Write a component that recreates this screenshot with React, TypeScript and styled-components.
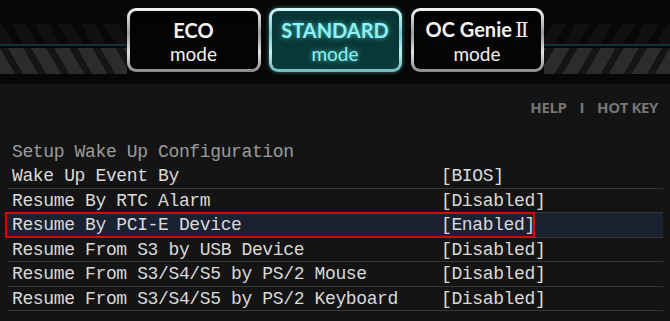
import React from "react";
import styled, { createGlobalStyle } from "styled-components";

const Global = createGlobalStyle`
  html, body { margin: 0; padding: 0; background: #141414; }
  body { width: 670px; height: 321px; overflow: hidden; }
`;

const Page = styled.div`
  width: 670px;
  height: 321px;
  display: flex;
  flex-direction: column;
  background: #141414;
`;

const TopBand = styled.div`
  height: 84px;
  display: flex;
  background: #070707;
`;

const StripePanel = styled.div`
  flex: 1;
  display: flex;
  flex-direction: column;
  padding-top: 24px;
`;

const FaintStripes = styled.div<{ $dir: "left" | "right" }>`
  height: 20px;
  background: repeating-linear-gradient(
    ${(p) => (p.$dir === "left" ? "60deg" : "-60deg")},
    #101010 0 12px,
    #080808 12px 20px
  );
`;

const TealLine = styled.div`
  height: 2px;
  background: #16303a;
`;

const Stripes = styled.div<{ $dir: "left" | "right" }>`
  height: 26px;
  margin-top: 2px;
  background: repeating-linear-gradient(
    ${(p) => (p.$dir === "left" ? "60deg" : "-60deg")},
    #2c2c2c 0 13px,
    #151515 13px 20px
  );
`;

const ModeGroup = styled.div`
  display: flex;
  align-items: flex-start;
  padding-top: 8px;
  gap: 8px;
`;

const ModeButton = styled.div<{ $active?: boolean; $w: number; $shift?: number }>`
  width: ${(p) => p.$w}px;
  margin-left: ${(p) => p.$shift ?? 0}px;
  height: 64px;
  box-sizing: border-box;
  border: 3px solid transparent;
  border-radius: 9px;
  padding-top: 2px;
  background: ${(p) =>
    p.$active
      ? "linear-gradient(#083434, #0a3a3a) padding-box, linear-gradient(180deg, #d6fbfc, #7cc9cc 40%, #bdf0f2 70%, #6fb9bc) border-box"
      : "linear-gradient(#030303, #050505) padding-box, linear-gradient(180deg, #f4f4f4, #9a9a9a 40%, #e2e2e2 70%, #8a8a8a) border-box"};
  box-shadow: ${(p) => (p.$active ? "0 0 4px rgba(120,230,230,0.5)" : "none")};
  display: flex;
  flex-direction: column;
  align-items: center;
  justify-content: center;
  font-family: Lato, "Liberation Sans", sans-serif;
  color: ${(p) => (p.$active ? "#8ff3f3" : "#f2f2f2")};
  text-shadow: ${(p) => (p.$active ? "0 0 5px rgba(90,230,230,0.8)" : "none")};
  line-height: normal;
`;

const ModeTitle = styled.span`
  font-size: 20px;
  font-weight: 700;
  white-space: pre;
`;

const Numeral = styled.span`
  font-family: "Liberation Serif", "DejaVu Serif", serif;
  font-weight: 400;
  font-size: 20px;
  margin-left: 3px;
`;

const ModeSub = styled.span`
  font-size: 19px;
  font-weight: 400;
`;

const Body = styled.div`
  flex: 1;
  display: flex;
  flex-direction: column;
  padding: 0 7px 0 8px;
`;

const HelpBar = styled.div`
  height: 44px;
  display: flex;
  justify-content: flex-end;
  align-items: center;
  gap: 13px;
  padding-right: 5px;
  padding-top: 1px;
  box-sizing: border-box;
  font-family: "Open Sans", "Liberation Sans", sans-serif;
  font-weight: 700;
  font-size: 15px;
  color: #767676;
  letter-spacing: -0.4px;
`;

const Divider = styled.span`
  font-weight: 700;
`;

const Mono = styled.div`
  font-family: "Liberation Mono", "DejaVu Sans Mono", monospace;
  font-size: 18px;
  letter-spacing: -0.37px;
`;

const SectionTitle = styled(Mono)`
  margin-top: 12px;
  height: 24px;
  line-height: 24px;
  padding-left: 4px;
  color: #9c9c9c;
`;

const List = styled.div`
  display: flex;
  flex-direction: column;
`;

const Row = styled(Mono)<{ $selected?: boolean }>`
  position: relative;
  height: 24.5px;
  box-sizing: border-box;
  display: grid;
  grid-template-columns: 429px 1fr;
  align-items: center;
  padding-left: 4px;
  padding-top: 1px;
  color: #dadada;
  border-bottom: 1px solid #363636;
  background: ${(p) => (p.$selected ? "#1a2131" : "transparent")};
`;

const Label = styled.span`
  white-space: pre;
`;

const Value = styled.span`
  white-space: pre;
`;

const SelectBox = styled.div`
  position: absolute;
  left: -3px;
  top: -1px;
  width: 530px;
  height: 26px;
  box-sizing: border-box;
  border: 2px solid #e30000;
`;

const rows = [
  { label: "Wake Up Event By", value: "[BIOS]" },
  { label: "Resume By RTC Alarm", value: "[Disabled]" },
  { label: "Resume By PCI-E Device", value: "[Enabled]", selected: true },
  { label: "Resume From S3 by USB Device", value: "[Disabled]" },
  { label: "Resume From S3/S4/S5 by PS/2 Mouse", value: "[Disabled]" },
  { label: "Resume From S3/S4/S5 by PS/2 Keyboard", value: "[Disabled]" },
];

export default function App() {
  return (
    <Page>
      <Global />
      <TopBand>
        <StripePanel>
          <FaintStripes $dir="left" />
          <TealLine />
          <Stripes $dir="left" />
        </StripePanel>
        <ModeGroup>
          <ModeButton $w={134}>
            <ModeTitle>ECO</ModeTitle>
            <ModeSub>mode</ModeSub>
          </ModeButton>
          <ModeButton $w={133} $active>
            <ModeTitle>STANDARD</ModeTitle>
            <ModeSub>mode</ModeSub>
          </ModeButton>
          <ModeButton $w={133} $shift={1}>
            <ModeTitle>
              OC Genie<Numeral>Ⅱ</Numeral>
            </ModeTitle>
            <ModeSub>mode</ModeSub>
          </ModeButton>
        </ModeGroup>
        <StripePanel>
          <FaintStripes $dir="right" />
          <TealLine />
          <Stripes $dir="right" />
        </StripePanel>
      </TopBand>
      <Body>
        <HelpBar>
          <span>HELP</span>
          <Divider>I</Divider>
          <span>HOT KEY</span>
        </HelpBar>
        <SectionTitle>Setup Wake Up Configuration</SectionTitle>
        <List>
          {rows.map((r) => (
            <Row key={r.label} $selected={r.selected}>
              <Label>{r.label}</Label>
              <Value>{r.value}</Value>
              {r.selected && <SelectBox />}
            </Row>
          ))}
        </List>
      </Body>
    </Page>
  );
}
